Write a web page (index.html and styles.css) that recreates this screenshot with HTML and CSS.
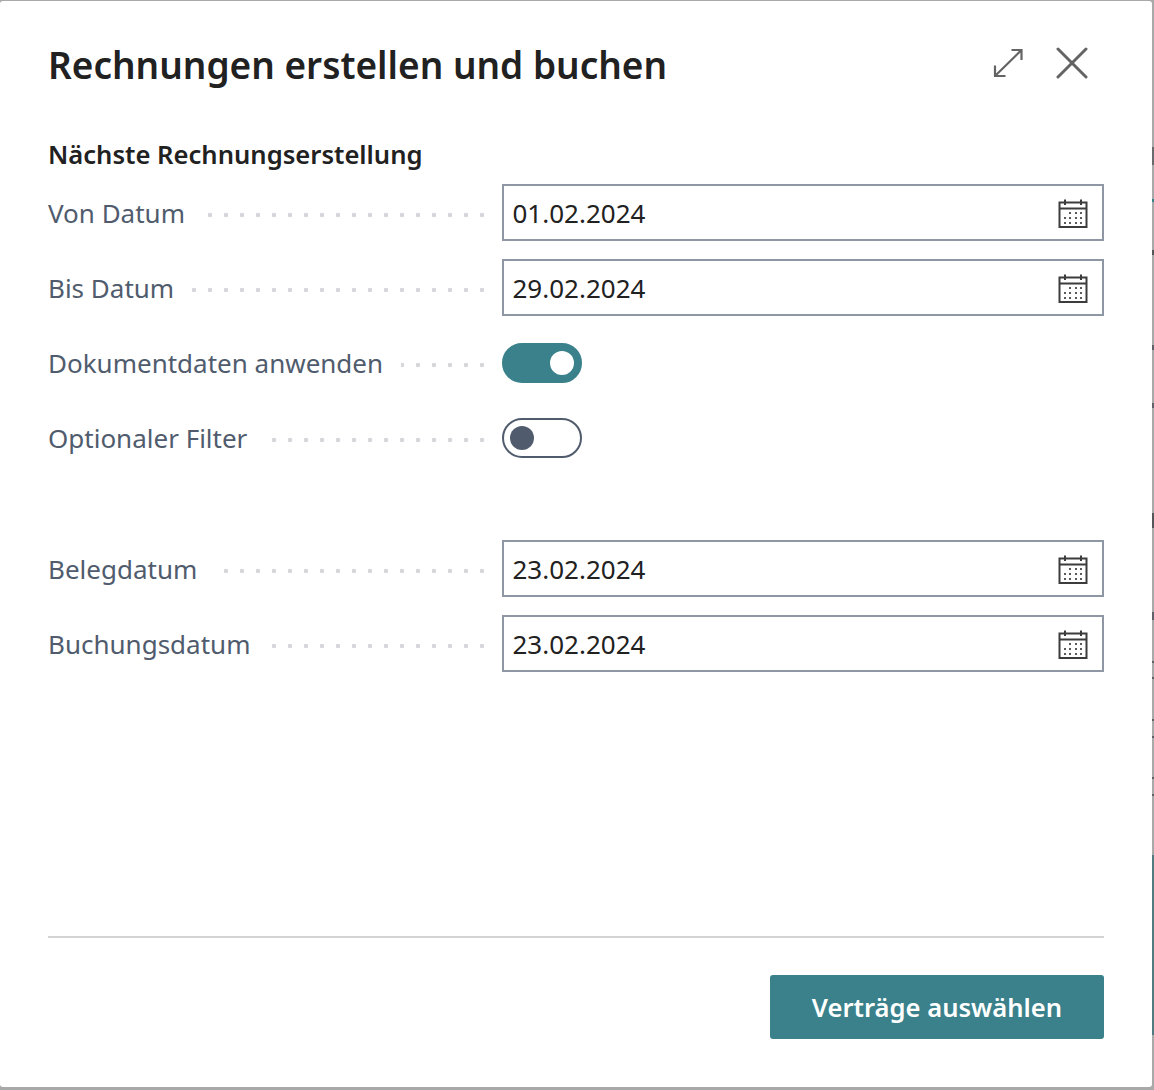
FILE: index.html
```html
<!DOCTYPE html>
<html lang="de">
<head>
  <meta charset="UTF-8" />
  <title>Rechnungen erstellen und buchen</title>
  <link rel="stylesheet" href="styles.css">
</head>
<body>
  <div class="dialog">
    <div class="dialog-head">
      <h1>Rechnungen erstellen und buchen</h1>
      <div class="head-icons">
        <svg class="icon-expand" width="30" height="30" viewBox="0 0 30 30">
          <path d="M2 28 L28.5 2 M18.5 2 H28.5 V12 M2 17.5 V28 H12.5" />
        </svg>
        <svg class="icon-close" width="32" height="32" viewBox="0 0 32 32">
          <path d="M2 2 L30 30 M30 2 L2 30" />
        </svg>
      </div>
    </div>

    <h2>Nächste Rechnungserstellung</h2>

    <div class="fields">
      <div class="field">
        <div class="leader"><label>Von Datum</label></div>
        <div class="date-input">
          <span>01.02.2024</span>
          <svg class="cal" width="30" height="30" viewBox="0 0 30 30"><use href="#calendar" /></svg>
        </div>
      </div>
      <div class="field">
        <div class="leader"><label>Bis Datum</label></div>
        <div class="date-input">
          <span>29.02.2024</span>
          <svg class="cal" width="30" height="30" viewBox="0 0 30 30"><use href="#calendar" /></svg>
        </div>
      </div>
      <div class="field">
        <div class="leader"><label>Dokumentdaten anwenden</label></div>
        <div class="toggle on"><i></i></div>
      </div>
      <div class="field">
        <div class="leader"><label>Optionaler Filter</label></div>
        <div class="toggle"><i></i></div>
      </div>
    </div>

    <div class="fields second">
      <div class="field">
        <div class="leader"><label>Belegdatum</label></div>
        <div class="date-input">
          <span>23.02.2024</span>
          <svg class="cal" width="30" height="30" viewBox="0 0 30 30"><use href="#calendar" /></svg>
        </div>
      </div>
      <div class="field">
        <div class="leader"><label>Buchungsdatum</label></div>
        <div class="date-input">
          <span>23.02.2024</span>
          <svg class="cal" width="30" height="30" viewBox="0 0 30 30"><use href="#calendar" /></svg>
        </div>
      </div>
    </div>

    <div class="dialog-foot">
      <button>Verträge auswählen</button>
    </div>
  </div>

  <svg class="defs" width="0" height="0">
    <symbol id="calendar" viewBox="0 0 30 30">
      <path class="cal-line" d="M1.5 4.5 H28.5 V29 H1.5 Z M1.5 10.5 H28.5 M7 1.5 V7 M23 1.5 V7" />
      <path class="cal-dots" d="M11 14h2v2h-2z M17 14h2v2h-2z M22 14h2v2h-2z M6 19h2v2h-2z M11 19h2v2h-2z M17 19h2v2h-2z M22 19h2v2h-2z M6 24h2v2h-2z M11 24h2v2h-2z M17 24h2v2h-2z M22 24h2v2h-2z" />
    </symbol>
  </svg>
</body>
</html>
```

FILE: styles.css
```css
* {
  box-sizing: border-box;
}

html, body {
  height: 100%;
}

/* what shows of the page behind the dialog, along its right edge */
body {
  margin: 0;
  padding-top: 1px;
  background-color: #a9a9a9;
  background-image: linear-gradient(to bottom,
    transparent 147px, #6a6a6e 147px, #6a6a6e 165px, transparent 165px,
    transparent 199px, #3a818b 199px, #3a818b 202px, transparent 202px,
    transparent 250px, #55555a 250px, #55555a 255px, transparent 255px,
    transparent 345px, #606068 345px, #606068 350px, transparent 350px,
    transparent 403px, #606068 403px, #606068 408px, transparent 408px,
    transparent 513px, #55555a 513px, #55555a 528px, transparent 528px,
    transparent 612px, #606068 612px, #606068 620px, transparent 620px,
    transparent 661px, #606068 661px, #606068 663px, transparent 663px,
    transparent 677px, #606068 677px, #606068 679px, transparent 679px,
    transparent 719px, #606068 719px, #606068 721px, transparent 721px,
    transparent 736px, #606068 736px, #606068 738px, transparent 738px,
    transparent 777px, #606068 777px, #606068 779px, transparent 779px,
    transparent 794px, #606068 794px, #606068 796px, transparent 796px,
    transparent 855px, #4f7a82 855px, #4f7a82 1035px, transparent 1035px);
  background-size: 2px 100%;
  background-position: right top;
  background-repeat: no-repeat;
  font-family: "Noto Sans", "Open Sans", sans-serif;
  color: #212121;
  overflow: hidden;
}

.dialog {
  width: 1152px;
  height: 1086px;
  background: #fff;
  border-radius: 3px;
  padding: 0 48px;
  display: flex;
  flex-direction: column;
}

.dialog-head {
  height: 129px;
  display: flex;
  justify-content: space-between;
  align-items: flex-start;
}

h1 {
  margin: 38px 0 0;
  font-size: 37px;
  line-height: 52px;
  font-weight: 600;
}

.head-icons {
  display: flex;
  align-items: center;
  gap: 33px;
  margin: 46px 16px 0 0;
}

.icon-expand path, .icon-close path {
  fill: none;
  stroke: #646464;
}

.icon-expand path {
  stroke-width: 2.2;
}

.icon-close path {
  stroke-width: 3;
  stroke-linecap: round;
}

h2 {
  margin: 0;
  font-size: 25.6px;
  line-height: 49px;
  font-weight: 600;
  height: 54px;
}

.fields {
  display: flex;
  flex-direction: column;
  gap: 18px;
}

.second {
  margin-top: 74px;
}

.field {
  display: grid;
  grid-template-columns: 442px 602px;
  column-gap: 12px;
  height: 57px;
  align-items: center;
}

.leader {
  height: 57px;
  line-height: 58px;
  background-image: radial-gradient(circle at 8px 31px, #d6d6db 2px, transparent 2.6px);
  background-size: 16px 57px;
  background-position: right top;
  background-repeat: repeat-x;
}

label {
  display: inline-block;
  height: 57px;
  font-size: 26px;
  color: #505c6d;
  background: #fff;
  padding-right: 18px;
}

.date-input {
  height: 57px;
  border: 2px solid #8e97a3;
  display: flex;
  align-items: center;
  justify-content: space-between;
  padding: 0 14px 0 8.5px;
  font-size: 26px;
  color: #212121;
}

.cal-line {
  fill: none;
  stroke: #3c3c3c;
  stroke-width: 2;
}

.cal-dots {
  fill: #5a5a5a;
}

.defs {
  position: absolute;
}

.toggle {
  width: 80px;
  height: 40px;
  border-radius: 20px;
  border: 2px solid #505c6d;
  display: flex;
  align-items: center;
  padding: 0 6px;
}

.toggle i {
  width: 24px;
  height: 24px;
  border-radius: 50%;
  background: #505c6d;
}

.toggle.on {
  background: #3a818b;
  border-color: #3a818b;
  justify-content: flex-end;
}

.toggle.on i {
  background: #fff;
}

.dialog-foot {
  margin-top: auto;
  border-top: 2px solid #d4d4d4;
  height: 151px;
  padding-top: 37px;
  display: flex;
  justify-content: flex-end;
}

button {
  width: 334px;
  height: 64px;
  background: #3a818b;
  color: #fff;
  border: none;
  border-radius: 3px;
  font-family: inherit;
  font-size: 25.6px;
  font-weight: 600;
}
```
